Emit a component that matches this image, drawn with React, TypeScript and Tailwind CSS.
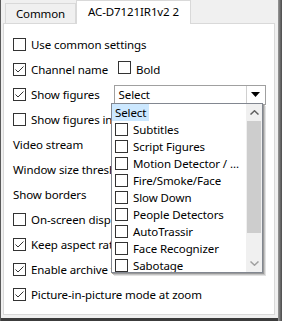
import React from "react";

const font = { fontFamily: '"Noto Sans", "Segoe UI", sans-serif' };

function Box({ checked = false, size = 13 }: { checked?: boolean; size?: number }) {
  return (
    <span
      className="inline-flex shrink-0 items-center justify-center border border-[#333333] bg-white"
      style={{ width: size, height: size }}
    >
      {checked && (
        <svg width={size - 2} height={size - 2} viewBox="0 0 11 11">
          <path d="M1.5 5.5 L4 8 L9.5 2.5" fill="none" stroke="#333" strokeWidth="1" />
        </svg>
      )}
    </span>
  );
}

function CheckRow({ label, checked = false, children }: { label: string; checked?: boolean; children?: React.ReactNode }) {
  return (
    <div className="flex h-[25px] items-center whitespace-nowrap">
      <Box checked={checked} />
      <span className="ml-[5px]">{label}</span>
      {children}
    </div>
  );
}

function LabelRow({ label }: { label: string }) {
  return <div className="flex h-[25px] items-center whitespace-nowrap">{label}</div>;
}

const items = [
  "Subtitles",
  "Script Figures",
  "Motion Detector / ...",
  "Fire/Smoke/Face",
  "Slow Down",
  "People Detectors",
  "AutoTrassir",
  "Face Recognizer",
  "Sabotage",
];

export default function App() {
  return (
    <div className="flex h-[321px] w-[282px] overflow-hidden bg-[#3c3c3c] text-[11.5px] tracking-[-0.1px] text-black" style={font}>
      <div className="w-[1px] bg-[#5a5a5a]" />
      <div className="flex h-[318px] w-[277px] flex-col bg-[#f0f0f0] pl-[2px]">
        {/* tabs */}
        <div className="relative z-10 flex h-[23px] items-end">
          <div className="ml-[2px] flex h-[20px] w-[71px] items-center justify-center border border-b-0 border-[#d9d9d9] bg-[#f0f0f0]">
            Common
          </div>
          <div className="-mb-[1px] flex h-[24px] w-[115px] items-center justify-center border border-b-0 border-[#d9d9d9] bg-white pb-[1px]">
            AC-D7121IR1v2 2
          </div>
        </div>
        {/* panel */}
        <div className="relative h-[292px] w-[272px] border border-[#d9d9d9] bg-white pl-[9px] pt-[8px]">
          <CheckRow label="Use common settings" />
          <CheckRow label="Channel name" checked>
            <span className="ml-[10px]">
              <Box />
            </span>
            <span className="ml-[5px]">Bold</span>
          </CheckRow>
          <CheckRow label="Show figures" checked>
            <div className="ml-[14px] flex h-[20px] w-[152px] items-center border border-[#a0a0a0] bg-white">
              <span className="flex-1 pl-[4px]">Select</span>
              <span className="flex h-[18px] w-[19px] items-center justify-center border-l border-[#d0d0d0]">
                <svg width="9" height="5" viewBox="0 0 9 5">
                  <path d="M0 0 H9 L4.5 5 Z" fill="#000" />
                </svg>
              </span>
            </div>
          </CheckRow>
          <CheckRow label="Show figures in fullscreen mode" />
          <LabelRow label="Video stream" />
          <LabelRow label="Window size threshold" />
          <LabelRow label="Show borders" />
          <CheckRow label="On-screen display" />
          <CheckRow label="Keep aspect ratio" checked />
          <CheckRow label="Enable archive timeline" checked />
          <CheckRow label="Picture-in-picture mode at zoom" checked />

          {/* dropdown list overlay */}
          <div className="absolute left-[107px] top-[79px] z-20 flex h-[170px] w-[152px] overflow-hidden border border-[#828790] bg-white shadow-[1px_1px_0_#9a9a9a,2px_2px_0_#c4c4c4,3px_3px_0_#e2e2e2]">
            <div className="flex-1 overflow-hidden">
              <div className="flex h-[17px] items-center">
                <span className="bg-[#cce8ff] px-[3px] leading-[17px]">Select</span>
              </div>
              {items.map((it) => (
                <div key={it} className="flex h-[17px] items-center whitespace-nowrap pl-[3px]">
                  <Box size={13} />
                  <span className="ml-[5px]">{it}</span>
                </div>
              ))}
            </div>
            <div className="flex w-[16px] flex-col bg-[#f0f0f0]">
              <div className="flex h-[17px] items-center justify-center">
                <svg width="9" height="5" viewBox="0 0 9 5">
                  <path d="M0.5 4.5 L4.5 0.8 L8.5 4.5" fill="none" stroke="#606060" strokeWidth="1.5" />
                </svg>
              </div>
              <div className="mx-[1px] h-[112px] bg-[#cdcdcd]" />
              <div className="flex-1" />
              <div className="flex h-[17px] items-center justify-center">
                <svg width="9" height="5" viewBox="0 0 9 5">
                  <path d="M0.5 0.5 L4.5 4.2 L8.5 0.5" fill="none" stroke="#a0a0a0" strokeWidth="1.5" />
                </svg>
              </div>
            </div>
          </div>
        </div>
      </div>
      <div className="h-[321px] w-[4px] bg-gradient-to-r from-[#9a9a9a] to-[#4a4a4a]" />
    </div>
  );
}
